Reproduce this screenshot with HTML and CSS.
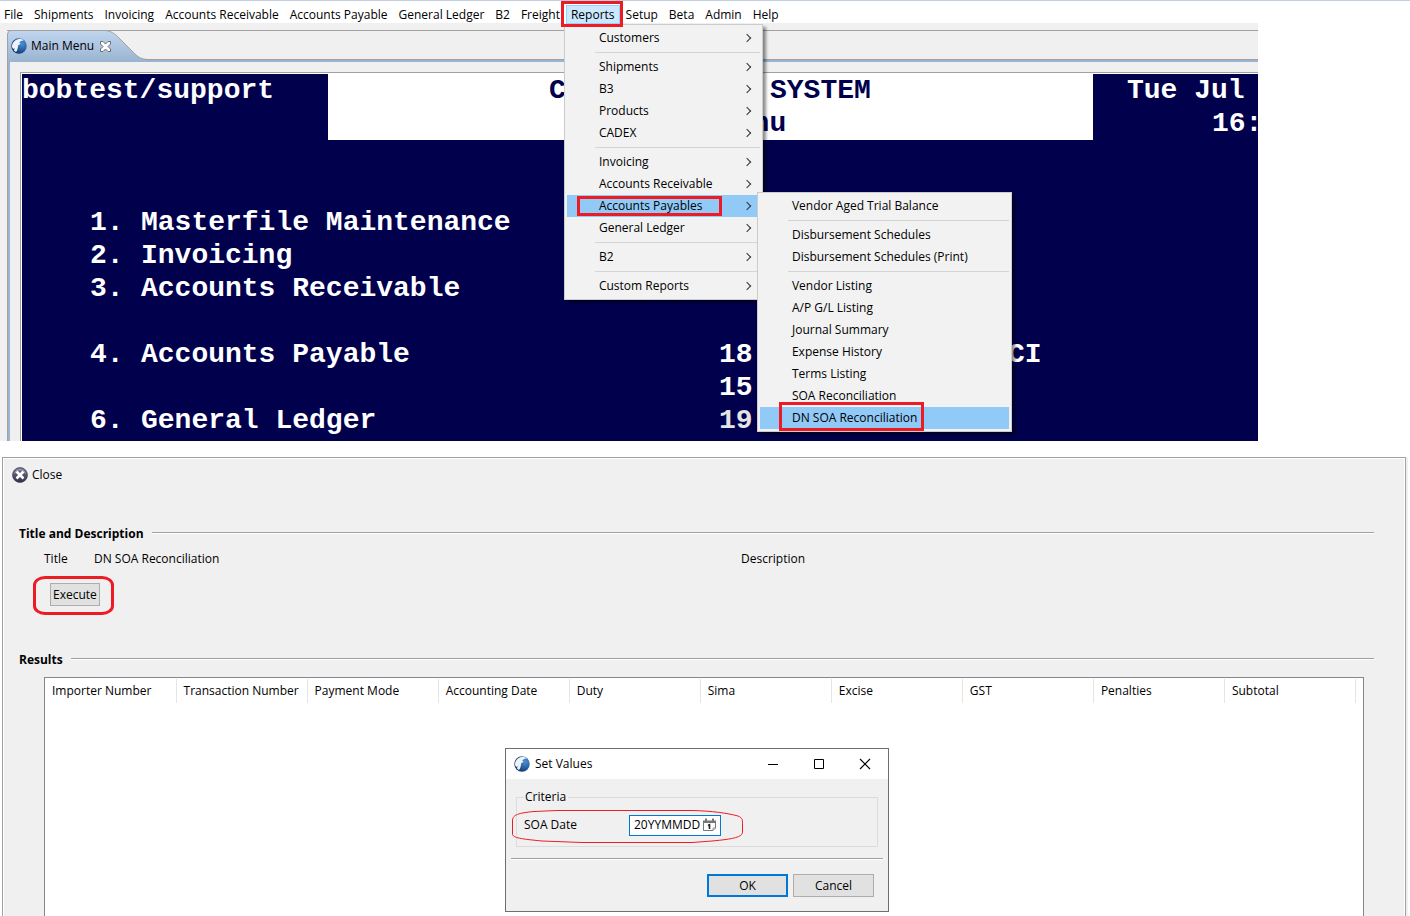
FILE: index.html
```html
<!DOCTYPE html>
<html lang="en">
<head>
    <meta charset="UTF-8">
    <meta name="viewport" content="width=device-width, initial-scale=1.0">
    <title>DN SOA Reconciliation</title>
    <link rel="stylesheet" href="styles.css">
</head>
<body>

    <svg class="sprite" aria-hidden="true">
        <defs>
            <radialGradient id="globe" cx="70%" cy="35%" r="75%">
                <stop offset="0" stop-color="#4a90d6"/>
                <stop offset="0.6" stop-color="#235a9c"/>
                <stop offset="1" stop-color="#12305c"/>
            </radialGradient>
            <linearGradient id="tab-fill" x1="0" y1="0" x2="0" y2="1">
                <stop offset="0" stop-color="#c1d6ef"/>
                <stop offset="1" stop-color="#99b4d1"/>
            </linearGradient>
            <linearGradient id="close-fill" x1="0" y1="0" x2="0" y2="1">
                <stop offset="0" stop-color="#77778f"/>
                <stop offset="1" stop-color="#2e2e4a"/>
            </linearGradient>
        </defs>
        <symbol id="logo" viewBox="0 0 16 16">
            <circle cx="8" cy="8" r="7.7" fill="url(#globe)"/>
            <path d="M1 9C0.800 4.500 4.500 0.800 9.500 0.800L13 2.300C10 2.800 8.800 3.600 8.300 5L9.800 5.800 7.200 7.300C6.800 10 6.500 12.500 5 14L3 12.500 3.600 10 2.200 11Z" fill="#eef3f9"/>
        </symbol>
    </svg>

    <ul class="menubar">
        <li><button>File</button></li>
        <li><button>Shipments</button></li>
        <li><button>Invoicing</button></li>
        <li><button>Accounts Receivable</button></li>
        <li><button>Accounts Payable</button></li>
        <li><button>General Ledger</button></li>
        <li><button>B2</button></li>
        <li><button>Freight</button></li>
        <li class="open">
            <button>Reports</button>
            <ul class="menu">
                <li class="sub"><button>Customers</button></li>
                <li class="separator"></li>
                <li class="sub"><button>Shipments</button></li>
                <li class="sub"><button>B3</button></li>
                <li class="sub"><button>Products</button></li>
                <li class="sub"><button>CADEX</button></li>
                <li class="separator"></li>
                <li class="sub"><button>Invoicing</button></li>
                <li class="sub"><button>Accounts Receivable</button></li>
                <li class="sub selected">
                    <button>Accounts Payables</button>
                    <span class="mark"></span>
                    <ul class="menu submenu">
                        <li><button>Vendor Aged Trial Balance</button></li>
                        <li class="separator"></li>
                        <li><button>Disbursement Schedules</button></li>
                        <li><button>Disbursement Schedules (Print)</button></li>
                        <li class="separator"></li>
                        <li><button>Vendor Listing</button></li>
                        <li><button>A/P G/L Listing</button></li>
                        <li><button>Journal Summary</button></li>
                        <li><button>Expense History</button></li>
                        <li><button>Terms Listing</button></li>
                        <li><button>SOA Reconciliation</button></li>
                        <li class="selected">
                            <button>DN SOA Reconciliation</button>
                            <span class="mark tall"></span>
                        </li>
                    </ul>
                </li>
                <li class="sub"><button>General Ledger</button></li>
                <li class="separator"></li>
                <li class="sub"><button>B2</button></li>
                <li class="separator"></li>
                <li class="sub"><button>Custom Reports</button></li>
            </ul>
        </li>
        <li><button>Setup</button></li>
        <li><button>Beta</button></li>
        <li><button>Admin</button></li>
        <li><button>Help</button></li>
    </ul>

    <div class="workbench">
        <div class="tabs">
            <button class="tab">
                <svg class="tab-shape" viewBox="0 0 142 32" aria-hidden="true">
                    <path d="M0.500 32V5Q0.500 0.500 5 0.500H97C104 0.500 108 4 112 8L126 22C131 27 134 29.500 141 29.500V32Z" fill="url(#tab-fill)"/>
                    <path d="M0.500 32V5Q0.500 0.500 5 0.500H97C104 0.500 108 4 112 8L126 22C131 27 134 29.500 142 29.500" fill="none" stroke="#a0a0a0"/>
                </svg>
                <svg class="icon" aria-hidden="true"><use href="#logo"/></svg>
                <span>Main Menu</span>
                <svg class="tab-close" viewBox="0 0 11 11" aria-hidden="true">
                    <path d="M0.500 0.500H3L5.500 3 8 0.500H10.500V3L8 5.500 10.500 8V10.500H8L5.500 8 3 10.500H0.500V8L3 5.500 0.500 3Z" fill="#fff" stroke="#6c6c6c"/>
                </svg>
            </button>
        </div>
        <div class="tab-body">
            <div class="terminal">
                <span class="banner"></span>
                <span class="r1 c1">bobtest/support</span>
                <span class="r1 c32 dark">C</span>
                <span class="r1 c45 dark">SYSTEM</span>
                <span class="r1 c66">Tue Jul</span>
                <span class="r2 c42 dark">Menu</span>
                <span class="r2 c71">16:</span>
                <span class="r5 c5">1.</span>
                <span class="r5 c8">Masterfile Maintenance</span>
                <span class="r6 c5">2.</span>
                <span class="r6 c8">Invoicing</span>
                <span class="r7 c5">3.</span>
                <span class="r7 c8">Accounts Receivable</span>
                <span class="r9 c5">4.</span>
                <span class="r9 c8">Accounts Payable</span>
                <span class="r9 c42">18</span>
                <span class="r9 c59">CI</span>
                <span class="r10 c42">15</span>
                <span class="r11 c5">6.</span>
                <span class="r11 c8">General Ledger</span>
                <span class="r11 c42 dim">19</span>
            </div>
        </div>
    </div>

    <main class="report">
        <button class="close">
            <svg class="icon" viewBox="0 0 16 16" aria-hidden="true">
                <circle cx="8" cy="8" r="7.500" fill="url(#close-fill)" stroke="#33334d" stroke-width="0.6"/>
                <path d="M4.500 4.500L11.500 11.500M11.500 4.500L4.500 11.500" stroke="#fff" stroke-width="2.600"/>
                <path d="M2.500 6.500A5.800 5.800 0 0 1 13.500 6.500" fill="none" stroke="#b9b9cc" stroke-width="0.800"/>
            </svg>
            Close
        </button>

        <h2>Title and Description</h2>
        <div class="fields">
            <span>Title</span>
            <span>DN SOA Reconciliation</span>
            <span>Description</span>
        </div>
        <div class="actions">
            <button class="btn">Execute</button>
        </div>

        <h2>Results</h2>
        <div class="results">
            <table>
                <thead>
                    <tr>
                        <th>Importer Number</th>
                        <th>Transaction Number</th>
                        <th>Payment Mode</th>
                        <th>Accounting Date</th>
                        <th>Duty</th>
                        <th>Sima</th>
                        <th>Excise</th>
                        <th>GST</th>
                        <th>Penalties</th>
                        <th>Subtotal</th>
                    </tr>
                </thead>
            </table>
        </div>

        <form class="dialog" role="dialog" aria-labelledby="dialog-title">
            <header>
                <svg class="icon" aria-hidden="true"><use href="#logo"/></svg>
                <span id="dialog-title">Set Values</span>
                <button type="button" aria-label="Minimize">
                    <svg viewBox="0 0 12 12"><path d="M1 6.500H11" stroke="#000"/></svg>
                </button>
                <button type="button" aria-label="Maximize">
                    <svg viewBox="0 0 12 12"><path d="M1.500 1.500H10.500V10.500H1.500Z" fill="none" stroke="#000"/></svg>
                </button>
                <button type="button" aria-label="Close">
                    <svg viewBox="0 0 12 12"><path d="M1 1L11 11M11 1L1 11" stroke="#000" stroke-width="1.100"/></svg>
                </button>
            </header>
            <fieldset>
                <legend>Criteria</legend>
                <label for="soa-date">SOA Date</label>
                <div class="date">
                    <input type="text" id="soa-date" value="20YYMMDD">
                    <svg viewBox="0 0 15 14" aria-hidden="true">
                        <path d="M1.500 3.500H13.500V10L11 12.500H1.500Z" fill="#fff" stroke="#777"/>
                        <path d="M1 2.500H14V5H1Z" fill="#777"/>
                        <path d="M4 0.500V3.500M11 0.500V3.500" stroke="#777" stroke-width="2"/>
                        <path d="M6 7.500L7.500 6.800V11" fill="none" stroke="#222" stroke-width="1.600"/>
                        <path d="M11 12.500V10H13.500" fill="none" stroke="#999"/>
                    </svg>
                </div>
            </fieldset>
            <svg class="ring" viewBox="0 0 231 34" aria-hidden="true">
                <path d="M0.500 10C1 5 6 3 22 1.500L45 0.500H180C200 1 215 3 226 6C231 8 230.500 10 230.500 16V22C230.500 27 222 29 200 31L180 32.500H70L30 31C10 29 0.500 28 0.500 24Z" fill="none" stroke="#ed1c24"/>
            </svg>
            <footer>
                <button type="submit" class="btn default">OK</button>
                <button type="button" class="btn">Cancel</button>
            </footer>
        </form>
    </main>

</body>
</html>
```

FILE: styles.css
```css
*, *::before, *::after {
    box-sizing: border-box;
}
body {
    margin: 0;
    min-height: 100vh;
    display: flex;
    flex-direction: column;
    background: #fff;
    color: #000;
    font: 12px/16px "Open Sans", "Noto Sans", sans-serif;
}
button, input {
    font: inherit;
    color: inherit;
    margin: 0;
    padding: 0;
    border: 0;
    background: none;
}
ul {
    list-style: none;
    margin: 0;
    padding: 0;
}
.sprite {
    position: absolute;
    width: 0;
    height: 0;
}
.icon {
    width: 16px;
    height: 16px;
    flex: none;
}

/* menu bar */
.menubar {
    display: flex;
    gap: 1px;
    height: 23px;
    padding-top: 4px;
    border-top: 1px solid #c5cfe3;
}
.menubar > li {
    position: relative;
}
.menubar > li > button {
    display: block;
    height: 19px;
    padding: 0 5px;
    white-space: nowrap;
}
.menubar > li:first-child > button {
    padding-left: 4px;
}
.menubar > .open > button {
    background: #cce8ff;
    box-shadow: inset 0 0 0 1px #99d1ff;
}
.menubar > .open::after {
    content: "";
    position: absolute;
    inset: -4px -3px -4px -5px;
    border: 3px solid #ed1c24;
    z-index: 3;
}

/* drop-down menus */
.menu {
    position: absolute;
    top: 19px;
    left: -2px;
    z-index: 2;
    width: 199px;
    padding: 2px;
    background: #f2f2f2;
    border: 1px solid #ccc;
    box-shadow: 3px 3px 3px rgba(0, 0, 0, 0.45);
}
.menu li {
    position: relative;
}
.menu button {
    display: block;
    width: 100%;
    height: 22px;
    padding-left: 32px;
    text-align: left;
    white-space: nowrap;
}
.menu .selected > button {
    background: #91c9f7;
}
.menu .sub > button::after {
    content: "";
    position: absolute;
    top: 8px;
    right: 10px;
    width: 6px;
    height: 6px;
    border: solid #333;
    border-width: 1px 1px 0 0;
    transform: rotate(45deg);
}
.separator {
    height: 7px;
    padding: 3px 0 3px 28px;
}
.separator::before {
    content: "";
    display: block;
    height: 1px;
    background: #d4d4d4;
}
.submenu {
    top: -3px;
    left: 190px;
    width: 255px;
}
.mark {
    position: absolute;
    top: 1px;
    left: 10px;
    width: 145px;
    height: 20px;
    border: 3px solid #ed1c24;
}
.mark.tall {
    top: -5px;
    left: 19px;
    height: 29px;
}

/* main window */
.workbench {
    max-width: 1258px;
    height: 418px;
    padding: 7px 0 0 7px;
    background: #f0f0f0;
    overflow: hidden;
}
.tabs {
    height: 30px;
    border-top: 1px solid #a0a0a0;
    border-bottom: 1px solid #a0a0a0;
}
.tab {
    position: relative;
    display: flex;
    align-items: center;
    gap: 4px;
    width: 142px;
    height: 32px;
    margin-top: -1px;
    padding-left: 4px;
}
.tab > * {
    position: relative;
}
.tab .tab-shape {
    position: absolute;
    top: 0;
    left: 0;
    width: 142px;
    height: 32px;
}
.tab-close {
    width: 11px;
    height: 11px;
    margin-left: 2px;
}
.tab-body {
    height: 381px;
    padding: 10px 0 0 12px;
    border-left: 1px solid #a0a0a0;
    border-top: 2px solid #99b4d1;
    box-shadow: inset 2px 0 #99b4d1;
}
.terminal {
    display: grid;
    grid-template-columns: repeat(76, 17px);
    grid-template-rows: repeat(11, 33px);
    height: 369px;
    background: #00004d;
    border: 1px solid #a0a0a0;
    border-width: 1px 0 0 1px;
    box-shadow: inset 1px 1px #fff;
    padding: 1px 0 0 1px;
    color: #fff;
    font: bold 28px/33px "Liberation Mono", monospace;
    white-space: pre;
}
.terminal span {
    width: 0;
}
.terminal .banner {
    grid-area: 1 / 19 / 3 / 64;
    width: auto;
    background: #fff;
}
.terminal .dark { color: #00004d; }
.terminal .dim { color: #e4e4e4; }
.r1 { grid-row: 1; }
.r2 { grid-row: 2; }
.r5 { grid-row: 5; }
.r6 { grid-row: 6; }
.r7 { grid-row: 7; }
.r9 { grid-row: 9; }
.r10 { grid-row: 10; }
.r11 { grid-row: 11; }
.c1 { grid-column: 1; }
.c5 { grid-column: 5; }
.c8 { grid-column: 8; }
.c32 { grid-column: 32; }
.c42 { grid-column: 42; }
.c45 { grid-column: 45; }
.c59 { grid-column: 59; }
.c66 { grid-column: 66; }
.c71 { grid-column: 71; }

/* report panel */
.report {
    position: relative;
    flex: 1;
    display: flex;
    flex-direction: column;
    margin: 16px 4px 0 2px;
    padding: 9px 17px 0 16px;
    background: #f0f0f0;
    border: 1px solid #a0a0a0;
    border-bottom: 0;
    box-shadow: inset 1px 1px #fff, inset -1px 0 #fff, 2px 0 #f0f0f0;
}
.close {
    align-self: flex-start;
    display: flex;
    gap: 4px;
    margin-left: -7px;
}
.report h2 {
    display: flex;
    align-items: center;
    gap: 8px;
    margin: 43px 14px 0 0;
    font-size: 12px;
    line-height: 16px;
}
.report h2::after {
    content: "";
    flex: 1;
    height: 2px;
    margin-bottom: 2px;
    background: #a0a0a0;
    border-bottom: 1px solid #fff;
}
.fields {
    display: grid;
    grid-template-columns: 50px 1fr 1fr;
    margin: 9px 0 0 25px;
}
.actions {
    align-self: flex-start;
    margin: 9px 0 -6px 14px;
    padding: 4px 11px 6px 14px;
    border: 3px solid #ed1c24;
    border-radius: 12px / 9px;
}
.btn {
    height: 23px;
    padding: 0 2px;
    background: #e1e1e1;
    border: 1px solid #adadad;
}
.actions .btn {
    display: block;
}
.results {
    flex: 1;
    margin: 9px 24px 0 25px;
    padding-top: 1px;
    background: #fff;
    border: 1px solid #828790;
    border-bottom: 0;
    overflow: hidden;
}
table {
    width: 1311px;
    table-layout: fixed;
    border-collapse: collapse;
}
th {
    height: 24px;
    padding: 0 0 0 7px;
    border-right: 1px solid #e5e5e5;
    font-weight: normal;
    text-align: left;
    white-space: nowrap;
}

/* Set Values dialog */
.dialog {
    position: absolute;
    top: 290px;
    left: 502px;
    width: 384px;
    background: #f0f0f0;
    border: 1px solid #6e6e6e;
}
.dialog header {
    display: flex;
    align-items: center;
    height: 30px;
    padding-left: 8px;
    background: #fff;
}
.dialog header span {
    flex: 1;
    padding-left: 5px;
}
.dialog header button {
    width: 46px;
    height: 30px;
}
.dialog header button svg {
    display: block;
    width: 12px;
    height: 12px;
    margin: 0 auto;
}
.dialog fieldset {
    display: flex;
    align-items: center;
    height: 58px;
    margin: 10px 10px 11px;
    padding: 0 7px 1px;
    border: 1px solid #dcdcdc;
}
.dialog legend {
    padding: 0 2px 0 1px;
}
.dialog label {
    width: 105px;
}
.date {
    display: flex;
    align-items: center;
    width: 92px;
    height: 21px;
    padding: 0 3px 0 4px;
    background: #fff;
    border: 1px solid #0078d7;
}
.date input {
    flex: 1;
    min-width: 0;
    outline: 0;
}
.date svg {
    width: 15px;
    height: 14px;
    flex: none;
}
.ring {
    position: absolute;
    top: 61px;
    left: 6px;
    width: 231px;
    height: 34px;
}
.dialog footer {
    display: flex;
    justify-content: flex-end;
    gap: 5px;
    margin: 0 5px;
    padding: 15px 9px 14px;
    border-top: 1px solid #a0a0a0;
    box-shadow: inset 0 1px #fff;
}
.dialog footer .btn {
    width: 81px;
}
.btn.default {
    border: 2px solid #0078d7;
}
```
